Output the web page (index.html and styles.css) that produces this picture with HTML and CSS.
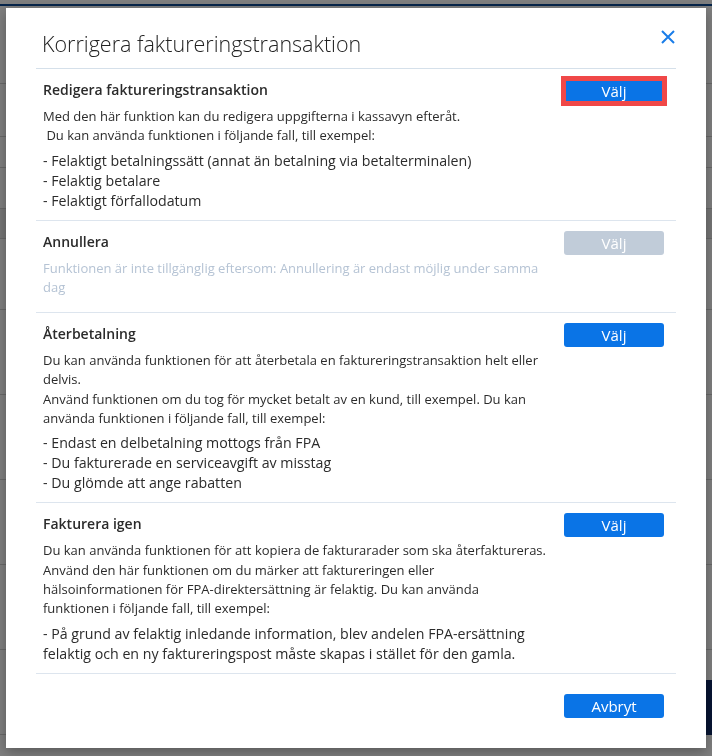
FILE: index.html
```html
<!DOCTYPE html>
<html lang="sv">

<head>
    <meta charset="UTF-8">
    <meta name="viewport" content="width=device-width, initial-scale=1.0">
    <title>Korrigera faktureringstransaktion</title>
    <link rel="stylesheet" href="styles.css">
</head>

<body>
    <!-- page behind the dialog -->
    <div class="page">
        <div class="topbar"></div>
        <div class="row head"></div>
        <div class="row r53"></div>
        <div class="row r31"></div>
        <div class="row r41"></div>
        <div class="row r30 active"></div>
        <div class="row r71"></div>
        <div class="row r85"></div>
        <div class="row r85"></div>
        <div class="row r85"></div>
        <div class="row r85"></div>
        <div class="row r85 last">
            <div class="page-btn"></div>
        </div>
    </div>
    <div class="overlay"></div>

    <div class="modal">
        <div class="modal-header">
            <h2>Korrigera faktureringstransaktion</h2>
            <button type="button" class="close-btn" aria-label="Stäng">
                <svg width="16" height="16" viewBox="0 0 16 16">
                    <path d="M2 2 L14 14 M14 2 L2 14" stroke="#1a7de8" stroke-width="2" fill="none" />
                </svg>
            </button>
        </div>

        <div class="option">
            <div class="info">
                <h3>Redigera faktureringstransaktion</h3>
                <p>Med den här funktion kan du redigera uppgifterna i kassavyn efteråt.<br>&nbsp;Du kan använda funktionen i följande fall, till exempel:</p>
                <ul>
                    <li>- Felaktigt betalningssätt (annat än betalning via betalterminalen)</li>
                    <li>- Felaktig betalare</li>
                    <li>- Felaktigt förfallodatum</li>
                </ul>
            </div>
            <button type="button" class="btn focused">Välj</button>
        </div>

        <div class="option">
            <div class="info">
                <h3>Annullera</h3>
                <p class="muted">Funktionen är inte tillgänglig eftersom: Annullering är endast möjlig under samma dag</p>
            </div>
            <button type="button" class="btn" disabled>Välj</button>
        </div>

        <div class="option">
            <div class="info">
                <h3>Återbetalning</h3>
                <p>Du kan använda funktionen för att återbetala en faktureringstransaktion helt eller delvis.<br>Använd funktionen om du tog för mycket betalt av en kund, till exempel. Du kan använda funktionen i följande fall, till exempel:</p>
                <ul>
                    <li>- Endast en delbetalning mottogs från FPA</li>
                    <li>- Du fakturerade en serviceavgift av misstag</li>
                    <li>- Du glömde att ange rabatten</li>
                </ul>
            </div>
            <button type="button" class="btn">Välj</button>
        </div>

        <div class="option">
            <div class="info">
                <h3>Fakturera igen</h3>
                <p>Du kan använda funktionen för att kopiera de fakturarader som ska återfaktureras. Använd den här funktionen om du märker att faktureringen eller hälsoinformationen för FPA-direktersättning är felaktig. Du kan använda funktionen i följande fall, till exempel:</p>
                <ul>
                    <li>- På grund av felaktig inledande information, blev andelen FPA-ersättning felaktig och en ny faktureringspost måste skapas i stället för den gamla.</li>
                </ul>
            </div>
            <button type="button" class="btn">Välj</button>
        </div>

        <div class="modal-footer">
            <button type="button" class="btn">Avbryt</button>
        </div>
    </div>
</body>

</html>
```

FILE: styles.css
```css
body {
    margin: 0;
    font-family: "Open Sans", "Noto Sans", sans-serif;
    color: #2b2b2b;
    background: #fff;
    height: 756px;
    overflow: hidden;
}

/* background page */
.page {
    height: 756px;
    background: #fff;
}

.topbar {
    height: 4px;
    border-bottom: 2px solid #0c4a96;
}

.row {
    box-sizing: border-box;
    border-bottom: 1px solid #d2d2d2;
}

.row.head {
    height: 78px;
}

.r53 { height: 53px; }
.r31 { height: 31px; }
.r41 { height: 41px; }
.r30 { height: 30px; }
.r71 { height: 71px; }
.r85 { height: 85px; }

.row.active {
    background: #ececec;
}

.row.last {
    display: flex;
    justify-content: flex-end;
    align-items: flex-start;
}

.page-btn {
    width: 60px;
    height: 55px;
    margin-top: 30px;
    background: #0e2a66;
}

.overlay {
    position: fixed;
    inset: 0;
    background: rgba(0, 0, 0, 0.5);
}

/* dialog */
.modal {
    position: absolute;
    left: 6px;
    top: 8px;
    width: 700px;
    box-sizing: border-box;
    padding: 0 30px 30px;
    background: #fff;
    box-shadow: 0 4px 12px rgba(0, 0, 0, 0.3);
}

.modal-header {
    display: flex;
    justify-content: space-between;
    align-items: flex-start;
    height: 60px;
    border-bottom: 1px solid #d5e0ea;
}

.modal-header h2 {
    margin: 21px 0 0 6px;
    font-size: 21.5px;
    line-height: 30px;
    font-weight: 300;
    color: #222;
}

.close-btn {
    margin-top: 21px;
    padding: 0;
    border: none;
    background: none;
    width: 16px;
    height: 16px;
    cursor: pointer;
}

.option {
    display: flex;
    justify-content: space-between;
    align-items: flex-start;
    padding: 10px 12px 9px 7px;
    border-bottom: 1px solid #dde5ee;
}

.info {
    width: 504px;
}

.info h3 {
    margin: 0 0 6px;
    font-size: 14px;
    line-height: 22px;
    font-weight: 600;
    color: #2b2b2b;
}

.info p {
    margin: 0;
    font-size: 13px;
    line-height: 19.3px;
}

.info p.muted {
    color: #b5c3d4;
    margin-bottom: 6px;
}

.info ul {
    list-style: none;
    margin: 5px 0 0;
    padding: 0;
    font-size: 14.2px;
    line-height: 20px;
}

.btn {
    width: 100px;
    height: 24px;
    padding: 0;
    border: none;
    border-radius: 3px;
    background: #0a74e6;
    color: #fff;
    font-family: inherit;
    font-size: 15px;
    cursor: pointer;
}

.btn:disabled {
    background: #c1ccd9;
    cursor: default;
}

.btn.focused {
    border-radius: 0;
    outline: 5px solid #f04848;
    outline-offset: -2px;
}

.modal-footer {
    display: flex;
    justify-content: flex-end;
    padding: 20px 12px 0 0;
}
```
